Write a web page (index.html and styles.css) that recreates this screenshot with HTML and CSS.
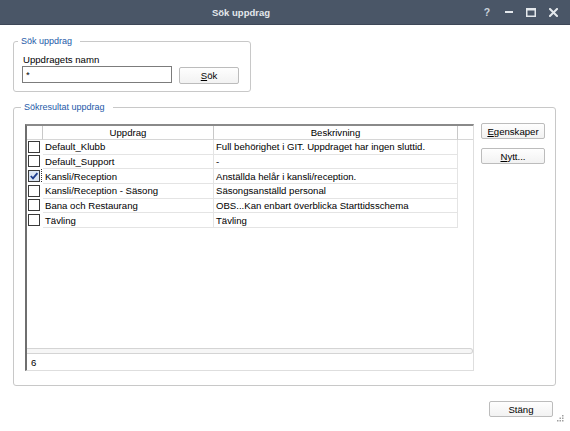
FILE: index.html
```html
<!DOCTYPE html>
<html lang="sv">
<head>
    <meta charset="UTF-8">
    <title>Sök uppdrag</title>
    <link rel="stylesheet" href="styles.css">
</head>
<body>
    <div class="window">
        <div class="titlebar">
            <div class="title">Sök uppdrag</div>
            <div class="controls">
                <span class="ctl help">?</span>
                <span class="ctl"><svg width="8" height="2" viewBox="0 0 8 2"><rect width="8" height="2" fill="#e4e8ec"/></svg></span>
                <span class="ctl"><svg width="10" height="9" viewBox="0 0 10 9"><rect x="0.75" y="0.75" width="8.5" height="7.5" fill="none" stroke="#e4e8ec" stroke-width="1.5"/><rect width="10" height="2.5" fill="#e4e8ec"/></svg></span>
                <span class="ctl"><svg width="9" height="9" viewBox="0 0 9 9"><path d="M1 1 L8 8 M8 1 L1 8" stroke="#e4e8ec" stroke-width="2" stroke-linecap="square"/></svg></span>
            </div>
        </div>

        <div class="content">
            <fieldset class="group search">
                <legend>Sök uppdrag</legend>
                <label class="field-label">Uppdragets namn</label>
                <div class="search-row">
                    <div class="textbox">*</div>
                    <button class="btn btn-search"><u>S</u>ök</button>
                </div>
            </fieldset>

            <fieldset class="group results">
                <legend>Sökresultat uppdrag</legend>
                <div class="results-body">
                    <div class="grid">
                        <table class="grid-table">
                            <colgroup>
                                <col class="c-check">
                                <col class="c-name">
                                <col class="c-desc">
                                <col class="c-pad">
                            </colgroup>
                            <thead>
                                <tr>
                                    <th></th>
                                    <th>Uppdrag</th>
                                    <th>Beskrivning</th>
                                    <th class="last"></th>
                                </tr>
                            </thead>
                            <tbody>
                                <tr>
                                    <td class="chk"><span class="box"></span></td>
                                    <td>Default_Klubb</td>
                                    <td>Full behörighet i GIT. Uppdraget har ingen sluttid.</td>
                                    <td class="pad"></td>
                                </tr>
                                <tr>
                                    <td class="chk"><span class="box"></span></td>
                                    <td>Default_Support</td>
                                    <td>-</td>
                                    <td class="pad"></td>
                                </tr>
                                <tr>
                                    <td class="chk"><span class="box checked"><svg width="10" height="10" viewBox="0 0 10 10"><path d="M1.8 5 L4 7.4 L8.4 2.2" fill="none" stroke="#1d3c8c" stroke-width="1.8"/></svg></span></td>
                                    <td>Kansli/Reception</td>
                                    <td>Anställda helår i kansli/reception.</td>
                                    <td class="pad"></td>
                                </tr>
                                <tr>
                                    <td class="chk"><span class="box"></span></td>
                                    <td>Kansli/Reception - Säsong</td>
                                    <td>Säsongsanställd personal</td>
                                    <td class="pad"></td>
                                </tr>
                                <tr>
                                    <td class="chk"><span class="box"></span></td>
                                    <td>Bana och Restaurang</td>
                                    <td>OBS...Kan enbart överblicka Starttidsschema</td>
                                    <td class="pad"></td>
                                </tr>
                                <tr>
                                    <td class="chk"><span class="box"></span></td>
                                    <td>Tävling</td>
                                    <td>Tävling</td>
                                    <td class="pad"></td>
                                </tr>
                            </tbody>
                        </table>
                        <div class="grid-fill"></div>
                        <div class="hscroll"></div>
                        <div class="grid-count">6</div>
                    </div>
                    <div class="side-buttons">
                        <button class="btn"><u>E</u>genskaper</button>
                        <button class="btn"><u>N</u>ytt...</button>
                    </div>
                </div>
            </fieldset>

            <div class="footer">
                <button class="btn btn-close">Stäng</button>
            </div>
        </div>

        <svg class="grip" width="7" height="7" viewBox="0 0 7 7">
            <rect x="5" y="0" width="1.5" height="1.5" fill="#a0a0a0"/>
            <rect x="2.5" y="2.5" width="1.5" height="1.5" fill="#a0a0a0"/>
            <rect x="5" y="2.5" width="1.5" height="1.5" fill="#a0a0a0"/>
            <rect x="0" y="5" width="1.5" height="1.5" fill="#a0a0a0"/>
            <rect x="2.5" y="5" width="1.5" height="1.5" fill="#a0a0a0"/>
            <rect x="5" y="5" width="1.5" height="1.5" fill="#a0a0a0"/>
        </svg>
    </div>
</body>
</html>
```

FILE: styles.css
```css
body {
    margin: 0;
    font-family: "Liberation Sans", Arial, sans-serif;
    font-size: 9.6px;
    color: #000;
    background: #fff;
}
.window {
    position: relative;
    width: 570px;
    height: 431px;
    display: flex;
    flex-direction: column;
    overflow: hidden;
}
.titlebar {
    height: 24px;
    background: #4a5667;
    border-bottom: 1px solid #3d4757;
    display: flex;
    align-items: center;
}
.title {
    flex: 1;
    padding-left: 6px;
    text-align: center;
    color: #e4e8ec;
    font-weight: bold;
    font-size: 9.5px;
}
.controls {
    display: flex;
    margin-right: 6px;
}
.ctl {
    width: 22px;
    height: 24px;
    display: flex;
    align-items: center;
    justify-content: center;
}
.help {
    color: #c9d2dc;
    font-weight: bold;
    font-size: 10.5px;
}
.content {
    flex: 1;
    display: flex;
    flex-direction: column;
    padding: 0 17px 0 13px;
}
.group {
    box-sizing: border-box;
    margin: 0;
    border: 1px solid #c8c8c8;
    border-radius: 3px;
    min-inline-size: 0;
}
.group legend {
    font-size: 9px;
    line-height: 12px;
    color: #2459a8;
    padding: 0 8px 0 3px;
    margin-left: -4px;
}
.search {
    width: 238px;
    margin-top: 10px;
    padding: 7px 8px 7px 8px;
}
.field-label {
    display: block;
    height: 12px;
    line-height: 12px;
    padding-left: 1px;
}
.search-row {
    display: flex;
    align-items: flex-start;
    gap: 7px;
}
.textbox {
    box-sizing: border-box;
    width: 150px;
    height: 17px;
    border: 1px solid #7c7c7c;
    padding: 1px 3px;
    line-height: 13px;
}
.btn {
    box-sizing: border-box;
    height: 17px;
    padding: 0;
    border: 1px solid #bcbcbc;
    border-radius: 2px;
    background: linear-gradient(#fefefe, #f2f2f2);
    font-family: inherit;
    font-size: 9.6px;
    color: #000;
    text-align: center;
}
.btn-search {
    width: 60px;
    margin-top: 1px;
}
.results {
    width: 543px;
    margin-top: 9px;
    padding: 11px 10px 14px 11px;
}
.results .results-body {
    display: flex;
    align-items: flex-start;
    gap: 7px;
}
.grid {
    box-sizing: border-box;
    width: 449px;
    height: 247px;
    border-top: 2px solid #8a8a8a;
    border-left: 2px solid #6f6f6f;
    border-right: 1px solid #dedede;
    border-bottom: 1px solid #dedede;
    display: flex;
    flex-direction: column;
}
.grid-table {
    width: 100%;
    table-layout: fixed;
    border-collapse: separate;
    border-spacing: 0;
}
.c-check { width: 16px; }
.c-name { width: 171px; }
.c-desc { width: 244px; }
.grid-table th {
    height: 13px;
    padding: 0;
    font-weight: normal;
    text-align: center;
    border-right: 1px solid #c9c9c9;
    border-bottom: 1px solid #d6d6d6;
    white-space: nowrap;
}
.grid-table th.last {
    border-right: none;
}
.grid-table td {
    height: 13.67px;
    padding: 0 0 0 2px;
    border-right: 1px solid #e4e4e4;
    border-bottom: 1px solid #e4e4e4;
    white-space: nowrap;
    overflow: hidden;
}
.grid-table td.chk,
.grid-table td.pad {
    border: none;
    border-bottom: 1px solid transparent;
}
.grid-table td.chk {
    padding-left: 1px;
}
.box {
    box-sizing: border-box;
    display: flex;
    align-items: center;
    justify-content: center;
    width: 12px;
    height: 12px;
    border: 1px solid #3a3a3a;
    background: #fff;
}
.box.checked {
    background: #dbe5f3;
    outline: 1px dotted #333;
    outline-offset: 1px;
}
.grid-fill {
    flex: 1;
}
.hscroll {
    box-sizing: border-box;
    height: 6px;
    border: 1px solid #d4d4d4;
    border-left: none;
    border-radius: 0 3px 3px 0;
    background: #f6f6f6;
}
.grid-count {
    height: 16px;
    line-height: 17px;
    padding-left: 4px;
}
.side-buttons {
    display: flex;
    flex-direction: column;
    gap: 9px;
    margin-top: -1px;
}
.side-buttons .btn {
    width: 64px;
    height: 16px;
}
.footer {
    display: flex;
    justify-content: flex-end;
    margin-top: 15px;
}
.btn-close {
    width: 64px;
    height: 16px;
}
.grip {
    position: absolute;
    left: 557px;
    top: 415px;
}
```
